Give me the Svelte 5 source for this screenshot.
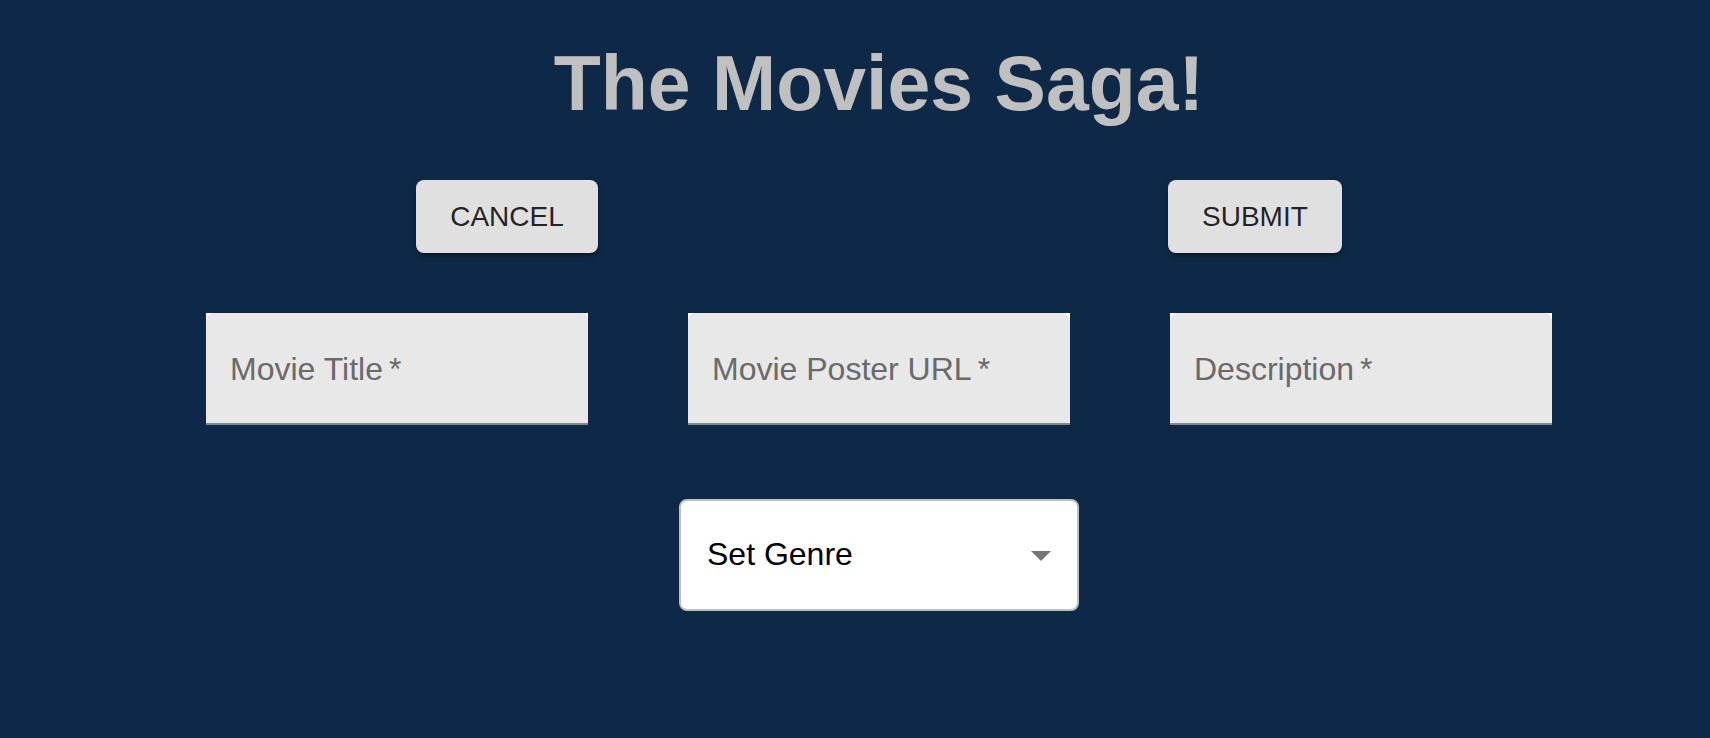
<script>
  const fields = [
    { id: 'title', label: 'Movie Title' },
    { id: 'poster', label: 'Movie Poster URL' },
    { id: 'description', label: 'Description' }
  ];

  let values = $state({ title: '', poster: '', description: '' });

  function clear() {
    values = { title: '', poster: '', description: '' };
  }
</script>

<main>
  <h1>The Movies Saga!</h1>
  <form onsubmit={(event) => event.preventDefault()}>
    <div class="actions">
      <button type="button" onclick={clear}>CANCEL</button>
      <button type="submit">SUBMIT</button>
    </div>
    <div class="fields">
      {#each fields as field (field.id)}
        <div class="field">
          <div class="filled">
            <input id={field.id} type="text" required bind:value={values[field.id]} />
            <label for={field.id} class:hidden={values[field.id]}>
              {field.label}<span aria-hidden="true">*</span>
            </label>
          </div>
        </div>
      {/each}
    </div>
    <div class="genre">
      <select aria-label="Genre">
        <option>Set Genre</option>
      </select>
      <svg viewBox="0 0 20 10" aria-hidden="true"><path d="M0 0h20L10 10z" /></svg>
    </div>
  </form>
</main>

<style>
  :global(body) {
    margin: 0;
    background: #0e2947;
    font-family: 'Liberation Sans', Arial, Helvetica, sans-serif;
  }

  main {
    padding: 35px 0 48px 48px;
  }

  h1 {
    margin: 0 0 49px;
    color: #c0c0c0;
    font-size: 77px;
    line-height: 96px;
    text-align: center;
  }

  form {
    display: flex;
    flex-direction: column;
    align-items: center;
  }

  .actions {
    display: flex;
    justify-content: space-around;
    width: 90%;
    margin-bottom: 60px;
  }

  button {
    padding: 12px 34px;
    border: 0;
    border-radius: 8px;
    background: #e0e0e0;
    box-shadow: 0 6px 2px -4px rgba(0, 0, 0, 0.2), 0 4px 4px rgba(0, 0, 0, 0.14), 0 2px 10px rgba(0, 0, 0, 0.12);
    color: rgba(0, 0, 0, 0.87);
    font: 28px / 49px 'Liberation Sans', Arial, Helvetica, sans-serif;
    cursor: pointer;
  }

  .fields {
    display: flex;
    justify-content: center;
    gap: 100px;
    width: 90%;
    margin-bottom: 74px;
  }

  .field {
    flex: 0 1 382px;
    min-width: 0;
    background: #fff;
  }

  .filled {
    display: grid;
    border-bottom: 2px solid #868686;
    border-radius: 8px 8px 0 0;
    background: #e8e8e8;
  }

  input,
  label {
    grid-area: 1 / 1;
    min-width: 0;
    padding: 37px 24px 35px;
    font: 32px / 38px 'Liberation Sans', Arial, Helvetica, sans-serif;
  }

  input {
    box-sizing: border-box;
    width: 100%;
    height: 110px;
    border: 0;
    background: transparent;
  }

  label {
    color: #6a6a6a;
    white-space: nowrap;
    pointer-events: none;
  }

  label span {
    margin-left: 6px;
  }

  .hidden {
    visibility: hidden;
  }

  .genre {
    position: relative;
    width: 400px;
    max-width: 100%;
  }

  select {
    display: block;
    width: 100%;
    padding: 34px 64px 36px 26px;
    border: 2px solid #bfbfbf;
    border-radius: 8px;
    appearance: none;
    background: #fff;
    color: #000;
    font: 32px / 38px 'Liberation Sans', Arial, Helvetica, sans-serif;
  }

  svg {
    position: absolute;
    top: 52px;
    right: 28px;
    width: 20px;
    height: 10px;
    fill: #757575;
    pointer-events: none;
  }
</style>
